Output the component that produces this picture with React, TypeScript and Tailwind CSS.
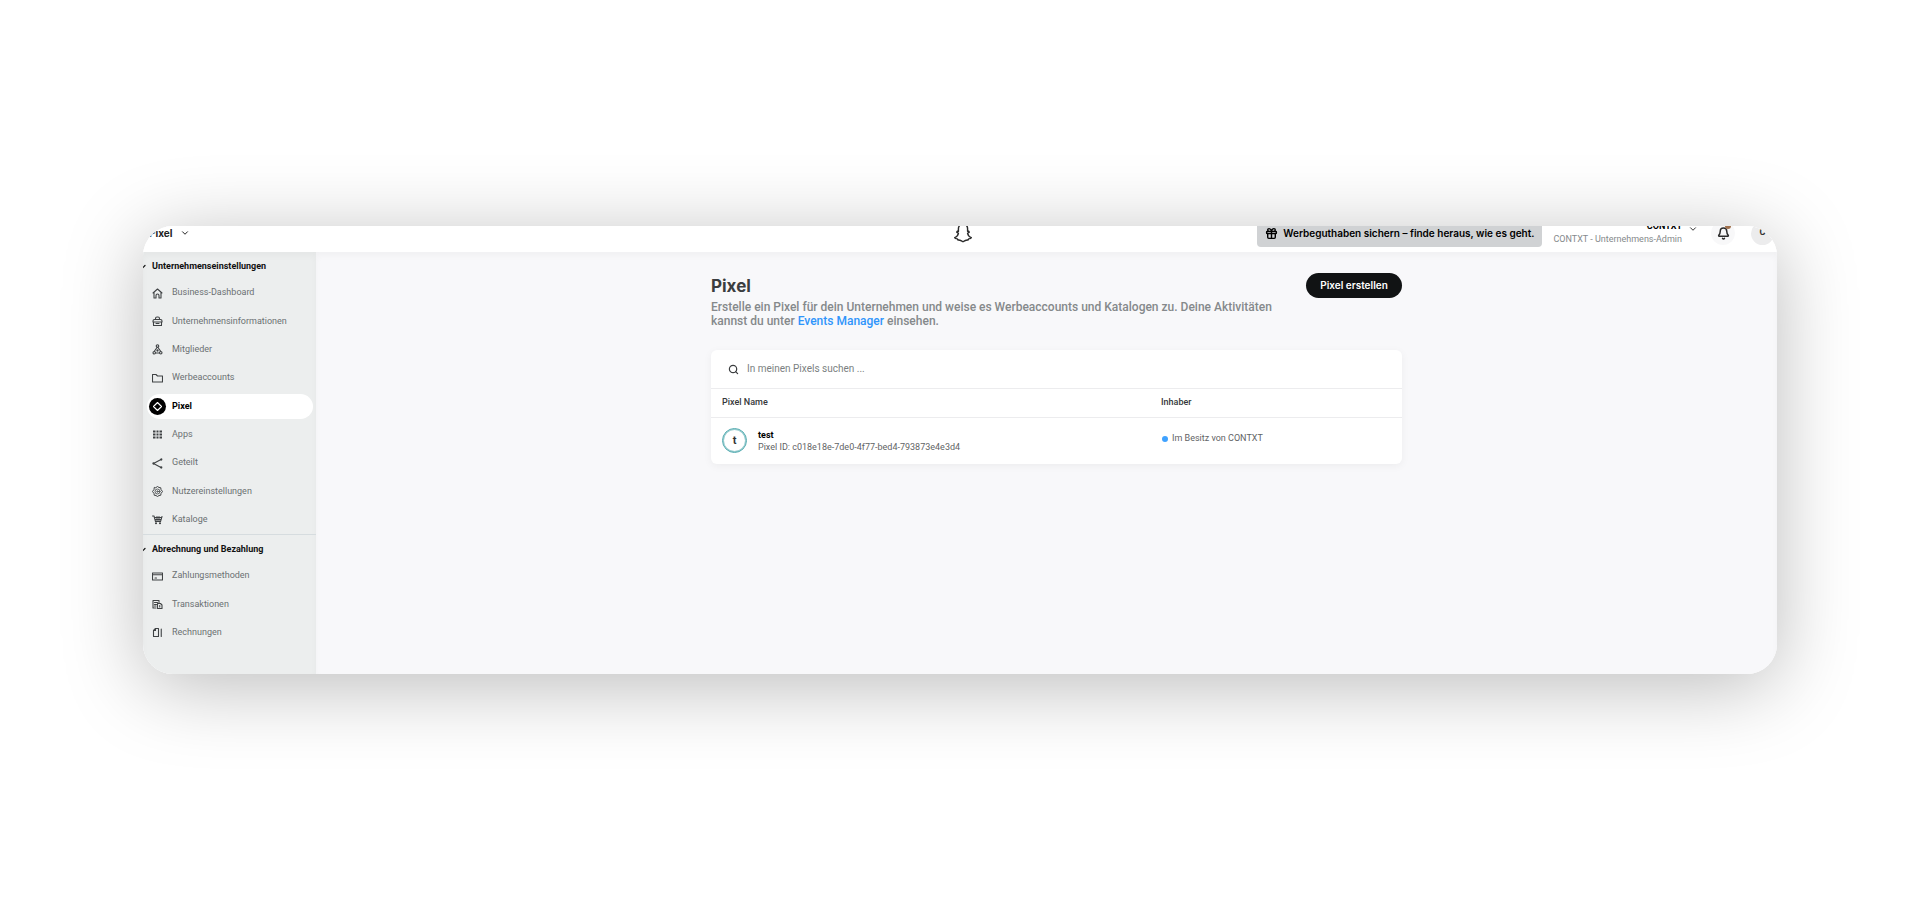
import { Bell, ChevronDown, Gift, Search } from 'lucide-react';
import type { ReactNode } from 'react';

type NavItem = {
  label: string;
  icon: ReactNode;
  active?: boolean;
};

function Icon({ children }: { children: ReactNode }) {
  return (
    <svg
      className="size-[11px]"
      viewBox="0 0 22 22"
      fill="none"
      stroke="currentColor"
      strokeWidth="2.2"
      strokeLinejoin="round"
      strokeLinecap="round"
      aria-hidden="true"
    >
      {children}
    </svg>
  );
}

const settings: NavItem[] = [
  {
    label: 'Business-Dashboard',
    icon: (
      <Icon>
        <path d="M2 10 11 2l9 8M4 9v11h4v-5a3 3 0 0 1 6 0v5h4V9" />
      </Icon>
    ),
  },
  {
    label: 'Unternehmensinformationen',
    icon: (
      <Icon>
        <path d="M7 7V5a3 3 0 0 1 3-3h2a3 3 0 0 1 3 3v2M5 7h12a3 3 0 0 1 3 3v2H2v-2a3 3 0 0 1 3-3ZM3 12v7h16v-7M8 15h6" />
      </Icon>
    ),
  },
  {
    label: 'Mitglieder',
    icon: (
      <Icon>
        <circle cx="11" cy="4" r="2.5" />
        <path d="M10 7 5 14M12 7l5 7M8 18h6" />
        <circle cx="4.5" cy="17.5" r="2.5" />
        <circle cx="17.5" cy="17.5" r="2.5" />
        <circle cx="11" cy="13" r="1.2" />
      </Icon>
    ),
  },
  {
    label: 'Werbeaccounts',
    icon: (
      <Icon>
        <path d="M1 3h7l3 3h10v12H1z" />
      </Icon>
    ),
  },
  {
    label: 'Pixel',
    active: true,
    icon: (
      <Icon>
        <path d="M7.5 6.500 11 3l3.500 3.500M15.500 7.500 19 11l-3.500 3.500M14.500 15.500 11 19l-3.500-3.500M6.500 14.500 3 11l3.500-3.500M7.500 6.500l-1 1M14.500 6.500l1 1M15.500 14.500l-1 1M7.500 15.500l-1-1" />
      </Icon>
    ),
  },
  {
    label: 'Apps',
    icon: (
      <svg className="size-[11px]" viewBox="0 0 22 22" fill="currentColor" aria-hidden="true">
        <path d="M2 3h5v4H2zM9 3h4v4H9zM15 3h5v4h-5zM2 9h5v4H2zM9 9h4v4H9zM15 9h5v4h-5zM2 15h5v4H2zM9 15h4v4H9zM15 15h5v4h-5z" />
      </svg>
    ),
  },
  {
    label: 'Geteilt',
    icon: (
      <Icon>
        <path d="M18 3 3 11l15 8" />
        <circle cx="18.5" cy="3" r="1.2" fill="currentColor" />
        <circle cx="18.5" cy="19" r="1.2" fill="currentColor" />
        <circle cx="3" cy="11" r="1.2" fill="currentColor" />
      </Icon>
    ),
  },
  {
    label: 'Nutzereinstellungen',
    icon: (
      <Icon>
        <path strokeWidth="2" d="m8 3 3-2 3 2 3.500.5.5 3.500 3 4-3 4-.5 3.500-3.500.5-3 2-3-2-3.500-.5L4 15l-3-4 3-4 .5-3.500Z" />
        <circle cx="11" cy="11" r="5" strokeWidth="1.6" />
        <circle cx="11" cy="11" r="1.5" strokeWidth="1.6" />
      </Icon>
    ),
  },
  {
    label: 'Kataloge',
    icon: (
      <Icon>
        <path d="M1 4h3l3 11h10l3-10M5 7h14M6 11h12M10 5v9M14 5v9" />
        <circle cx="8" cy="18.5" r="1" />
        <circle cx="16" cy="18.5" r="1" />
      </Icon>
    ),
  },
];

const billing: NavItem[] = [
  {
    label: 'Zahlungsmethoden',
    icon: (
      <Icon>
        <path d="M1 4h20v14H1zM1 7.500h20M6 14h3" />
      </Icon>
    ),
  },
  {
    label: 'Transaktionen',
    icon: (
      <Icon>
        <path d="M8 18H2V3h12v4M5 7h6M5 11h4M5 14h3" />
        <path d="M11 9h6l3 3v7h-9zM15.500 13v3" />
      </Icon>
    ),
  },
  {
    label: 'Rechnungen',
    icon: (
      <Icon>
        <path d="M7 3h6v16H3V7zM7 3v4H3M18.500 4v15" />
      </Icon>
    ),
  },
];

function NavSection({ title, items, listClass }: { title: string; items: NavItem[]; listClass: string }) {
  return (
    <section>
      <button type="button" className="flex h-[27px] w-full items-center gap-1 pt-[2px] text-[9px] font-bold text-[#111]">
        <ChevronDown className="-ml-[7px] size-3" strokeWidth={2.4} />
        {title}
      </button>
      <ul className={listClass}>
        {items.map((item) => (
          <li key={item.label} className="flex items-center pr-[3px] pl-1">
            <a
              href="#"
              className={
                item.active
                  ? 'flex h-[25px] w-full items-center gap-[6px] rounded-full bg-white pl-[2px] text-[9px] font-bold text-black'
                  : 'flex h-[25px] w-full items-center gap-[6px] rounded-full pl-[2px] text-[9px] text-[#6b7072]'
              }
            >
              <span
                className={
                  item.active
                    ? 'flex size-[17px] items-center justify-center rounded-full bg-black text-white'
                    : 'flex size-[17px] items-center justify-center text-[#3f4244]'
                }
              >
                {item.icon}
              </span>
              {item.label}
            </a>
          </li>
        ))}
      </ul>
    </section>
  );
}

function TopBar() {
  return (
    <header className="relative z-10 flex h-[26px] items-end overflow-hidden bg-white pb-px">
      <div className="grid h-9 w-full shrink-0 grid-cols-[1fr_auto_1fr] items-center">
        <button type="button" className="flex items-center gap-2 pl-[6px] font-['Inter',sans-serif] text-[10px] font-bold text-[#222]">
          Pixel
          <ChevronDown className="size-[10px]" strokeWidth={2.4} />
        </button>
        <svg className="ml-[6px] h-5 w-5" viewBox="0 0 24 24" fill="none" stroke="#2b2b2b" strokeWidth="1.7" strokeLinejoin="round" aria-label="Snapchat">
          <path d="M12 1.500c3.500 0 5.500 2.500 5.500 5.500v3l1.500-.2.500 1.200-2 1.500c.6 2.500 2 4.200 4.500 5-.2 1-1.500 1.400-3.300 1.600l-.6 1.400c-2-.4-3.600.2-6.100 2-2.500-1.800-4.100-2.400-6.100-2l-.6-1.400C3.500 18.900 2.200 18.500 2 17.500c2.500-.8 3.900-2.500 4.500-5l-2-1.500.5-1.200 1.500.2V7c0-3 2-5.500 5.500-5.500Z" />
        </svg>
        <div className="flex items-center justify-end pr-[3px]">
          <button type="button" className="flex h-7 items-center gap-[5px] rounded bg-[#d0d2d4] px-2 font-['Inter',sans-serif] text-[10px] font-semibold whitespace-nowrap text-black">
            <Gift className="size-[13px]" strokeWidth={2.6} />
            Werbeguthaben sichern – finde heraus, wie es geht.
          </button>
          <button type="button" className="ml-[11px] flex gap-[6px]">
            <span className="flex flex-col text-right text-[9px] leading-[13px] whitespace-nowrap">
              <span className="font-bold text-black">CONTXT</span>
              <span className="text-[#85898b]">CONTXT - Unternehmens-Admin</span>
            </span>
            <ChevronDown className="mt-1 size-[10px] text-[#333]" strokeWidth={2.4} />
          </button>
          <button type="button" aria-label="Benachrichtigungen" className="relative ml-[13px] flex size-6 items-center justify-center rounded-full bg-[#f8f8f9] text-[#2b2b2b]">
            <Bell className="size-[13px]" strokeWidth={2.8} />
            <span className="absolute top-[2px] right-1 size-[6px] rounded-full bg-[#a0704c]" />
          </button>
          <button type="button" className="ml-4 flex size-[23px] items-center justify-center rounded-full bg-[#ececed] text-[9px] font-bold text-[#333]">
            C
          </button>
        </div>
      </div>
    </header>
  );
}

function PixelTable() {
  return (
    <div className="mt-[22px] overflow-hidden rounded-md bg-white shadow-[0_2px_8px_rgba(0,0,0,0.05)]">
      <label className="flex h-[38px] items-center gap-2 pl-[17px]">
        <Search className="size-[11px] text-[#3c3f41]" strokeWidth={2.6} />
        <span className="sr-only">Suchen</span>
        <input type="text" placeholder="In meinen Pixels suchen ..." className="flex-1 text-[10px] leading-4 outline-none placeholder:text-[#7b7f81]" />
      </label>
      <table className="w-full table-fixed text-left text-[9px]">
        <thead>
          <tr className="h-[29px] border-y border-[#ececee] text-[#35383a]">
            <th className="w-[450px] pl-[11px] font-medium">Pixel Name</th>
            <th className="font-medium">Inhaber</th>
          </tr>
        </thead>
        <tbody>
          <tr className="h-[46px]">
            <td className="pl-[11px]">
              <div className="flex items-center gap-[11px]">
                <span className="flex size-[25px] items-center justify-center rounded-full border border-[#4fa9ae] text-[11px] font-bold text-[#333] ring-1 ring-[#4fa9ae]/60 ring-inset">
                  t
                </span>
                <div className="leading-3">
                  <p className="font-bold text-black">test</p>
                  <p className="text-[#5f6365]">Pixel ID: c018e18e-7de0-4f77-bed4-793873e4e3d4</p>
                </div>
              </div>
            </td>
            <td>
              <div className="flex items-center gap-1 pb-1 text-[#5f6365]">
                <span className="ml-[1px] size-[6px] rounded-full bg-[#3fa2ff]" />
                Im Besitz von CONTXT
              </div>
            </td>
          </tr>
        </tbody>
      </table>
    </div>
  );
}

export default function App() {
  return (
    <div className="flex min-h-screen items-center bg-white px-[143px] font-['Roboto','Liberation_Sans',sans-serif]">
      <div className="w-full rounded-[30px] shadow-[0_12px_80px_rgba(0,0,0,0.27)]">
        <div className="overflow-hidden rounded-[30px] bg-[#f8f8fa]">
          <TopBar />
          <div className="flex">
            <nav className="w-[173px] shrink-0 bg-[#eceeee] pb-[27px] shadow-[inset_0_4px_6px_rgba(0,0,0,0.03)]">
              <NavSection title="Unternehmenseinstellungen" items={settings} listClass="grid h-[255px] auto-rows-fr" />
              <div className="border-t border-[#d6dcdf]" />
              <NavSection title="Abrechnung und Bezahlung" items={billing} listClass="grid h-[85px] auto-rows-fr" />
            </nav>
            <main className="flex-1 pt-[21px] pl-5 shadow-[inset_0_4px_6px_rgba(0,0,0,0.03)]">
              <div className="mx-auto max-w-[691px]">
                <div className="flex items-start justify-between">
                  <div className="w-[580px]">
                    <h1 className="font-['Inter',sans-serif] text-[17px] leading-[27px] font-bold text-[#3b3d3f]">Pixel</h1>
                    <p className="text-xs leading-[14px] font-medium text-[#85898b]">
                      Erstelle ein Pixel für dein Unternehmen und weise es Werbeaccounts und Katalogen zu. Deine Aktivitäten kannst du unter{' '}
                      <a href="#" className="text-[#2f95fb]">Events Manager</a> einsehen.
                    </p>
                  </div>
                  <button type="button" className="h-[25px] w-24 rounded-full bg-[#111314] font-['Inter',sans-serif] text-[10px] font-semibold text-white">
                    Pixel erstellen
                  </button>
                </div>
                <PixelTable />
              </div>
            </main>
          </div>
        </div>
      </div>
    </div>
  );
}
